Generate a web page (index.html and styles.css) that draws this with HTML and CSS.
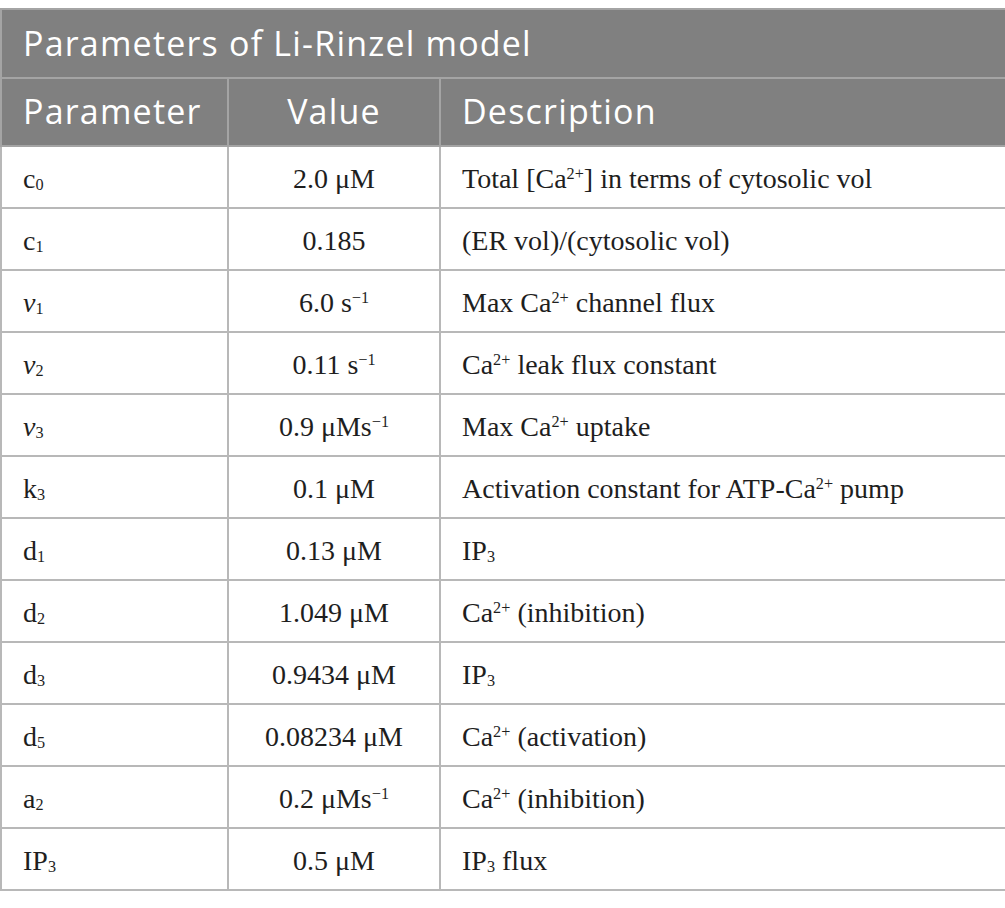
FILE: index.html
```html
<!DOCTYPE html>
<html lang="en">
<head>
    <meta charset="UTF-8">
    <meta name="viewport" content="width=device-width, initial-scale=1.0">
    <title>Parameters of Li-Rinzel model</title>
    <link rel="stylesheet" href="styles.css">
</head>
<body>
    <table class="params">
        <colgroup>
            <col class="col-param">
            <col class="col-value">
            <col class="col-desc">
        </colgroup>
        <thead>
            <tr class="title-row">
                <th colspan="3">Parameters of Li-Rinzel model</th>
            </tr>
            <tr class="head-row">
                <th>Parameter</th>
                <th class="center">Value</th>
                <th>Description</th>
            </tr>
        </thead>
        <tbody>
            <tr>
                <td>c<sub>0</sub></td>
                <td class="center">2.0 μM</td>
                <td>Total [Ca<sup>2+</sup>] in terms of cytosolic vol</td>
            </tr>
            <tr>
                <td>c<sub>1</sub></td>
                <td class="center">0.185</td>
                <td>(ER vol)/(cytosolic vol)</td>
            </tr>
            <tr>
                <td><span class="nu">ν</span><sub>1</sub></td>
                <td class="center">6.0 s<sup>−1</sup></td>
                <td>Max Ca<sup>2+</sup> channel flux</td>
            </tr>
            <tr>
                <td><span class="nu">ν</span><sub>2</sub></td>
                <td class="center">0.11 s<sup>−1</sup></td>
                <td>Ca<sup>2+</sup> leak flux constant</td>
            </tr>
            <tr>
                <td><span class="nu">ν</span><sub>3</sub></td>
                <td class="center">0.9 μMs<sup>−1</sup></td>
                <td>Max Ca<sup>2+</sup> uptake</td>
            </tr>
            <tr>
                <td>k<sub>3</sub></td>
                <td class="center">0.1 μM</td>
                <td>Activation constant for ATP-Ca<sup>2+</sup> pump</td>
            </tr>
            <tr>
                <td>d<sub>1</sub></td>
                <td class="center">0.13 μM</td>
                <td>IP<sub>3</sub></td>
            </tr>
            <tr>
                <td>d<sub>2</sub></td>
                <td class="center">1.049 μM</td>
                <td>Ca<sup>2+</sup> (inhibition)</td>
            </tr>
            <tr>
                <td>d<sub>3</sub></td>
                <td class="center">0.9434 μM</td>
                <td>IP<sub>3</sub></td>
            </tr>
            <tr>
                <td>d<sub>5</sub></td>
                <td class="center">0.08234 μM</td>
                <td>Ca<sup>2+</sup> (activation)</td>
            </tr>
            <tr>
                <td>a<sub>2</sub></td>
                <td class="center">0.2 μMs<sup>−1</sup></td>
                <td>Ca<sup>2+</sup> (inhibition)</td>
            </tr>
            <tr>
                <td>IP<sub>3</sub></td>
                <td class="center">0.5 μM</td>
                <td>IP<sub>3</sub> flux</td>
            </tr>
        </tbody>
    </table>
</body>
</html>
```

FILE: styles.css
```css
body {
    margin: 0;
    padding: 8px 0 0 0;
    background-color: #fff;
}
.params {
    width: 1005px;
    border-collapse: collapse;
    table-layout: fixed;
    font-family: "Liberation Serif", "Times New Roman", serif;
    font-size: 28px;
    color: #1e1e1e;
}
.col-param {
    width: 227px;
}
.col-value {
    width: 212px;
}
.col-desc {
    width: 566px;
}
th, td {
    border: 2px solid #b8b8b8;
    padding: 0 0 0 21px;
    text-align: left;
    vertical-align: middle;
}
th {
    background-color: #808080;
    color: #fff;
    font-family: "Open Sans", "Noto Sans", sans-serif;
    font-weight: 400;
    font-size: 34px;
    letter-spacing: 1.2px;
    border-color: #a4a4a4;
}
.title-row th {
    height: 65px;
    padding-bottom: 2px;
}
.head-row th {
    height: 64px;
    padding-bottom: 2px;
}
td {
    height: 56px;
    padding-top: 4px;
}
.center {
    text-align: center;
    padding-left: 0;
}
sub, sup {
    font-size: 0.58em;
    line-height: 0;
}
sub {
    vertical-align: -0.15em;
}
sup {
    vertical-align: 0.55em;
}
.nu {
    font-style: italic;
}
```
